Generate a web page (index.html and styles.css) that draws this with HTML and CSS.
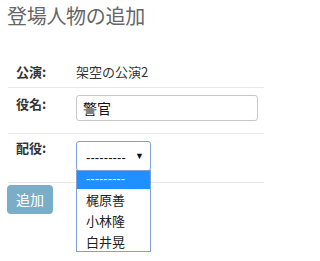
FILE: index.html
```html
<!DOCTYPE html>
<html lang="ja">
<head>
<meta charset="utf-8">
<link rel="stylesheet" href="styles.css">
</head>
<body>
<div class="page">
  <h1 class="title">登場人物の追加</h1>
  <div class="form">
    <div class="row row-first">
      <div class="label">公演:</div>
      <div class="value text">架空の公演2</div>
    </div>
    <div class="row row-name">
      <div class="label">役名:</div>
      <div class="value"><div class="input">警官</div></div>
    </div>
    <div class="row row-cast">
      <div class="label">配役:</div>
      <div class="value">
        <div class="select-wrap">
          <div class="select"><span class="sel-text">---------</span><span class="arrow">▼</span></div>
          <div class="dropdown">
            <div class="opt opt-active">---------</div>
            <div class="opt">梶原善</div>
            <div class="opt">小林隆</div>
            <div class="opt">白井晃</div>
          </div>
        </div>
      </div>
    </div>
  </div>
  <div class="actions"><span class="btn">追加</span></div>
</div>
</body>
</html>
```

FILE: styles.css
```css
html, body {
  margin: 0;
  padding: 0;
  background: #fff;
}
body {
  font-family: "Noto Sans CJK JP", "Noto Sans", sans-serif;
  color: #333;
  font-size: 13px;
  width: 272px;
  min-height: 261px;
  overflow: hidden;
}
.page {
  box-sizing: border-box;
  width: 272px;
  min-height: 261px;
  padding: 0 8px 0 7px;
}
.title {
  margin: 0;
  padding-top: 3px;
  font-size: 20px;
  line-height: 26px;
  font-weight: normal;
  color: #666;
  letter-spacing: -0.3px;
}
.form {
  margin-top: 27px;
  margin-left: 1px;
}
.row {
  display: flex;
  border-top: 1px solid #e8e8e8;
}
.row-first {
  border-top: none;
  height: 31px;
}
.row-name {
  height: 45px;
}
.row-cast {
  height: 48px;
  border-bottom: 1px solid #e8e8e8;
}
.label {
  width: 60px;
  padding-left: 8px;
  font-weight: bold;
  font-size: 13px;
  line-height: 20px;
  color: #333;
}
.row-first .label, .row-first .text {
  padding-top: 6px;
}
.row-name .label {
  padding-top: 6px;
}
.row-cast .label {
  padding-top: 4px;
}
.text {
  font-size: 13px;
  line-height: 20px;
  color: #333;
}
.value {
  flex: 1;
}
.row-name .value {
  padding-top: 7px;
}
.input {
  box-sizing: border-box;
  width: 182px;
  height: 26px;
  border: 1px solid #c8c8c8;
  border-radius: 3px;
  padding-left: 6px;
  font-size: 14px;
  line-height: 24px;
  color: #111;
}
.row-cast .value {
  padding-top: 7px;
}
.select-wrap {
  position: relative;
  width: 75px;
}
.select {
  box-sizing: border-box;
  width: 75px;
  height: 30px;
  border: 1px solid #7f9fd6;
  border-radius: 3px;
  display: flex;
  align-items: center;
  justify-content: space-between;
  padding: 0 6px 0 9px;
  font-family: "Liberation Sans", sans-serif;
  font-size: 13px;
  color: #111;
}
.sel-text {
  letter-spacing: 0.1px;
  margin-top: 2px;
}
.arrow {
  font-size: 9px;
  color: #111;
}
.dropdown {
  position: absolute;
  left: 0;
  top: 29px;
  box-sizing: border-box;
  width: 75px;
  height: 82px;
  border: 1px solid #7f9fd6;
  background: #fff;
  z-index: 2;
}
.opt {
  height: 21px;
  line-height: 21px;
  padding-left: 9px;
  font-size: 13px;
  color: #222;
}
.opt-active {
  height: 18px;
  line-height: 16px;
  background: #1e90ff;
  color: #fff;
  font-family: "Liberation Sans", sans-serif;
}
.actions {
  padding-top: 2px;
}
.btn {
  display: inline-block;
  width: 46px;
  height: 29px;
  line-height: 28px;
  text-align: center;
  background: #7aaec8;
  color: #fff;
  border-radius: 4px;
  font-size: 14px;
}
```
